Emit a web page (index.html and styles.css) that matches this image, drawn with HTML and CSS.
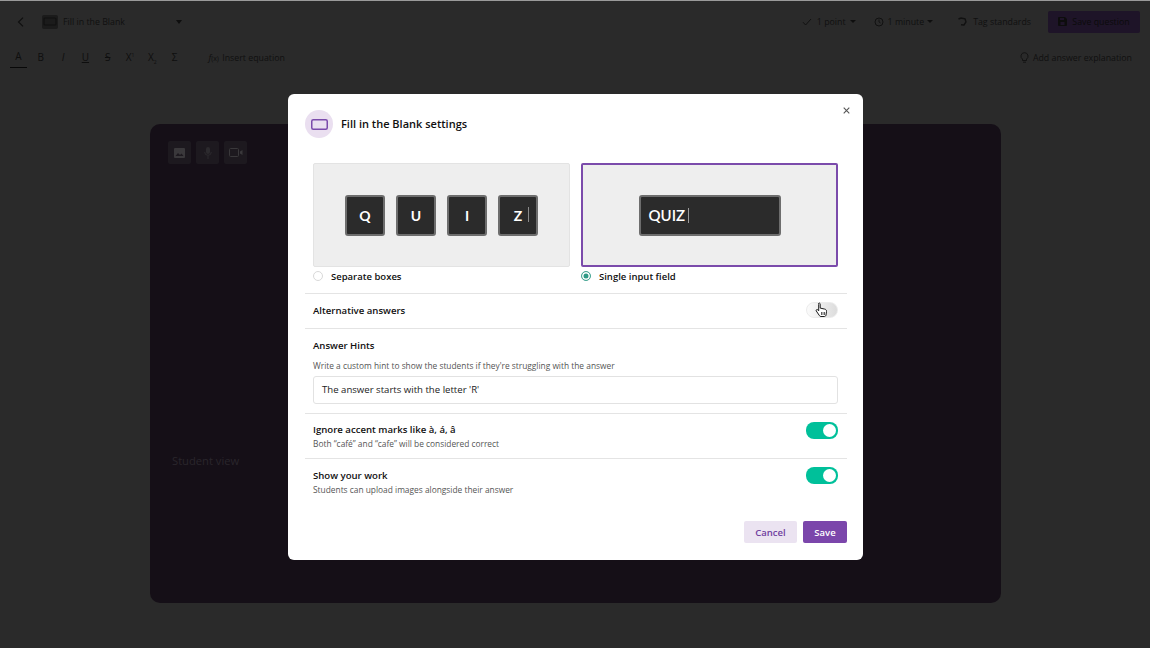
FILE: index.html
```html
<!DOCTYPE html>
<html lang="en">
<head>
    <meta charset="UTF-8">
    <meta name="viewport" content="width=device-width, initial-scale=1.0">
    <title>Fill in the Blank settings</title>
    <link rel="stylesheet" href="styles.css">
</head>
<body>
    <!-- Editor behind the overlay -->
    <div class="editor">
        <header class="topbar">
            <svg class="back" width="7" height="10" viewBox="0 0 7 10"><path d="M6 .7 1.500 5 6 9.300" fill="none" stroke="#0e0e0e" stroke-width="1.100"/></svg>
            <span class="type-icon">
                <svg width="14" height="9" viewBox="0 0 14 9"><rect x="1" y="1" width="12" height="7" rx="1" fill="none" stroke="#111" stroke-width="1.2"/></svg>
            </span>
            <span class="type-name">Fill in the Blank</span>
            <span class="caret type-caret"></span>
            <span class="top-item push points">
                <svg width="10" height="8" viewBox="0 0 10 8"><path d="M1 4.2 3.600 7 9 1" fill="none" stroke="#111" stroke-width="1"/></svg>
                1 point <span class="caret"></span>
            </span>
            <span class="top-item minutes">
                <svg width="10" height="10" viewBox="0 0 10 10"><circle cx="5" cy="5" r="4" fill="none" stroke="#111"/><path d="M5 2.500V5l1.600 1" fill="none" stroke="#111" stroke-width=".9"/></svg>
                1 minute <span class="caret"></span>
            </span>
            <span class="top-item tag">
                <svg width="10" height="9" viewBox="0 0 10 9"><path d="M1.500 2 4 1l4 .8L9 5 7 8 4 7.800" fill="none" stroke="#111" stroke-width="1.400"/></svg>
                Tag standards
            </span>
            <span class="save-question">
                <svg width="9" height="9" viewBox="0 0 9 9"><path d="M0 1a1 1 0 0 1 1-1h6l2 2v6a1 1 0 0 1-1 1H1a1 1 0 0 1-1-1z" fill="#0d0d0d"/><rect x="2" y="1" width="4" height="2" fill="#1e1428"/><rect x="2.500" y="5" width="4" height="3" fill="#1e1428"/></svg>
                Save question
            </span>
        </header>

        <div class="toolbar">
            <span class="tool tool-active">A</span>
            <span class="tool">B</span>
            <span class="tool tool-italic">I</span>
            <span class="tool tool-under">U</span>
            <span class="tool tool-strike">S</span>
            <span class="tool">X<sup>1</sup></span>
            <span class="tool">X<sub>2</sub></span>
            <span class="tool">Σ</span>
            <span class="equation"><i>f</i><small>(x)</small> Insert equation</span>
            <span class="hint-link">
                <svg width="9" height="11" viewBox="0 0 9 11"><path d="M4.500 .7a3.500 3.500 0 0 0-2 6.400V8.500h4V7.100a3.500 3.500 0 0 0-2-6.400zM3 10.200h3" fill="none" stroke="#111" stroke-width=".9"/></svg>
                Add answer explanation
            </span>
        </div>

        <section class="question-card">
            <div class="media-buttons">
                <span class="media-btn">
                    <svg width="11" height="10" viewBox="0 0 11 10"><rect width="11" height="10" rx="1" fill="#3a383b"/><path d="M1.500 8 4 5l2 2 1.500-1.500L9.500 8z" fill="#1d191f"/></svg>
                </span>
                <span class="media-btn">
                    <svg width="8" height="12" viewBox="0 0 8 12"><rect x="2" y="0" width="4" height="7" rx="2" fill="#2c2a2e"/><path d="M.7 5a3.300 3.300 0 0 0 6.600 0M4 8.500V12" fill="none" stroke="#2c2a2e"/></svg>
                </span>
                <span class="media-btn">
                    <svg width="14" height="9" viewBox="0 0 14 9"><rect x=".5" y=".5" width="9" height="8" rx="1" fill="none" stroke="#3a383b"/><path d="M11 3.500 13.500 2v5L11 5.500z" fill="#3a383b"/></svg>
                </span>
            </div>
            <p class="student-view">Student view</p>
        </section>
    </div>

    <!-- Settings modal -->
    <div class="modal">
        <div class="modal-head">
            <span class="modal-icon">
                <svg width="17" height="11" viewBox="0 0 17 11"><rect x=".75" y=".75" width="15.500" height="9.500" rx="1.500" fill="none" stroke="#7b4bab" stroke-width="1.500"/></svg>
            </span>
            <h2>Fill in the Blank settings</h2>
            <svg class="close" width="7" height="7" viewBox="0 0 7 7"><path d="M.7.7l5.600 5.600M6.300.7.7 6.300" stroke="#555" stroke-width="1.100"/></svg>
        </div>

        <div class="options">
            <div class="option">
                <div class="preview">
                    <span class="key">Q</span>
                    <span class="key">U</span>
                    <span class="key">I</span>
                    <span class="key key-cursor">Z</span>
                </div>
                <label class="radio-row"><span class="radio"></span>Separate boxes</label>
            </div>
            <div class="option">
                <div class="preview preview-selected">
                    <span class="key key-wide">QUIZ</span>
                </div>
                <label class="radio-row"><span class="radio radio-on"></span>Single input field</label>
            </div>
        </div>

        <div class="row row-alt">
            <span class="row-title">Alternative answers</span>
            <span class="switch">
                <svg class="pointer" width="13" height="16" viewBox="0 0 13 16"><path d="M3.500 1.500c.8-.8 1.700-.3 1.700.6v4l4.500 1c1.300.3 2 1.200 1.800 2.500l-.5 3.400c-.1 1-.8 1.500-1.700 1.500H6c-.7 0-1.200-.3-1.600-.9L1.300 9c-.6-1 .6-2 1.500-1.200l.9 1V2.500z" fill="#fff" stroke="#1a1a1a" stroke-width="1"/><path d="M6.500 10v3M8 10v3M9.500 10v3" stroke="#1a1a1a" stroke-width=".7"/></svg>
            </span>
        </div>

        <div class="row-stack hints">
            <span class="row-title">Answer Hints</span>
            <p class="row-desc hint-desc">Write a custom hint to show the students if they're struggling with the answer</p>
            <div class="hint-input">The answer starts with the letter 'R'</div>
        </div>

        <div class="row row-toggle">
            <div>
                <span class="row-title">Ignore accent marks like à, á, â</span>
                <p class="row-desc">Both “café” and “cafe” will be considered correct</p>
            </div>
            <span class="switch switch-on"></span>
        </div>

        <div class="row row-toggle row-last">
            <div>
                <span class="row-title">Show your work</span>
                <p class="row-desc">Students can upload images alongside their answer</p>
            </div>
            <span class="switch switch-on"></span>
        </div>

        <div class="modal-foot">
            <button type="button" class="btn-cancel">Cancel</button>
            <button type="button" class="btn-save">Save</button>
        </div>
    </div>
</body>
</html>
```

FILE: styles.css
```css
* { box-sizing: border-box; }
html, body { height: 100%; }
body {
    margin: 0;
    height: 648px;
    overflow: hidden;
    background: #2a2a2a;
    border-top: 1px solid #9a9a9a;
    font-family: "Open Sans", "Noto Sans", sans-serif;
    color: #101010;
}

/* Dimmed editor */
.editor {
    height: 100%;
    display: flex;
    flex-direction: column;
}
.topbar {
    height: 41px;
    display: flex;
    align-items: center;
    padding: 0 10px 0 17px;
    font-size: 8.800px;
}
.back { margin-right: 18px; }
.type-icon {
    width: 16px;
    height: 14px;
    background: #1b1b1b;
    border-radius: 2px;
    display: flex;
    align-items: center;
    justify-content: center;
    margin-right: 5px;
}
.type-name { width: 113px; }
.caret {
    display: inline-block;
    width: 0;
    height: 0;
    border-left: 3px solid transparent;
    border-right: 3px solid transparent;
    border-top: 3px solid #0e0e0e;
    vertical-align: middle;
}
.type-caret { border-left-width: 3.500px; border-right-width: 3.500px; border-top-width: 4px; }
.top-item {
    display: flex;
    align-items: center;
    gap: 4px;
    white-space: nowrap;
}
.top-item svg { margin-right: 1px; }
.push { margin-left: auto; }
.points { margin-right: 18px; }
.minutes { margin-right: 24px; gap: 3px; }
.tag { margin-right: 17px; gap: 5px; }
.save-question {
    width: 92px;
    height: 22px;
    background: #1e1428;
    border-radius: 2px;
    display: flex;
    align-items: center;
    justify-content: center;
    gap: 5px;
    color: #0b0b0b;
}

.toolbar {
    height: 31px;
    display: flex;
    align-items: center;
    padding: 0 18px 0 10px;
    font-size: 8.800px;
}
.tool {
    width: 17px;
    margin-right: 5.300px;
    height: 17px;
    text-align: center;
    line-height: 17px;
    font-size: 10px;
    color: #0e0e0e;
}
.tool sup, .tool sub { font-size: 5px; line-height: 0; }
.tool-active { border-bottom: 1px solid #080808; height: 20px; margin-top: 1px; }
.tool-italic { font-style: italic; }
.tool-under { text-decoration: underline; }
.tool-strike { text-decoration: line-through; }
.equation { margin-left: 20px; }
.equation small { font-size: 7px; margin-right: 1px; }
.hint-link {
    margin-left: auto;
    display: flex;
    align-items: center;
    gap: 4px;
}

.question-card {
    width: 851px;
    height: 479px;
    margin: 51px 0 0 150px;
    background: #150f17;
    border-radius: 10px;
    padding: 17px 18px;
}
.media-buttons { display: flex; gap: 5px; }
.media-btn {
    width: 23px;
    height: 23px;
    background: #1d191f;
    border-radius: 2px;
    display: flex;
    align-items: center;
    justify-content: center;
}
.student-view {
    margin: 289px 0 0 4px;
    font-size: 11.200px;
    color: #2a262c;
}

/* Modal */
.modal {
    position: absolute;
    left: 288px;
    top: 94px;
    width: 575px;
    height: 466px;
    background: #fff;
    border-radius: 6px;
    padding: 16px 16px 0 17px;
}
.modal-head {
    height: 28px;
    display: flex;
    align-items: center;
}
.modal-icon {
    width: 28px;
    height: 28px;
    border-radius: 50%;
    background: #eadff0;
    display: flex;
    align-items: center;
    justify-content: center;
    margin-right: 8px;
}
.modal-head h2 {
    margin: 0;
    font-size: 11px;
    font-weight: 600;
    line-height: 28px;
}
.close {
    position: absolute;
    top: 13px;
    right: 13px;
}

.options {
    display: flex;
    gap: 11px;
    margin: 25px 9px 0 8px;
}
.option { width: 257px; }
.preview {
    height: 104px;
    background: #eeeeee;
    border: 1px solid #e3e3e3;
    border-radius: 2px;
    display: flex;
    align-items: center;
    justify-content: center;
    gap: 11px;
}
.preview-selected { border: 2px solid #7b4bab; }
.key {
    width: 40px;
    height: 41px;
    background: #2b2b2b;
    border: 2px solid #6d6d6d;
    border-radius: 3px;
    color: #fff;
    font-family: Lato, "Open Sans", sans-serif;
    font-size: 14px;
    font-weight: 700;
    display: flex;
    align-items: center;
    justify-content: center;
}
.key-cursor { position: relative; }
.key-cursor::after {
    content: "";
    position: absolute;
    right: 7px;
    top: 10px;
    width: 1px;
    height: 15px;
    background: #8a8a8a;
}
.key-wide {
    width: 142px;
    justify-content: flex-start;
    padding-left: 8px;
    font-weight: 600;
    font-size: 15px;
}
.key-wide::after {
    content: "";
    width: 1px;
    height: 15px;
    margin-left: 3px;
    background: #9a9a9a;
}
.radio-row {
    display: flex;
    align-items: center;
    gap: 8px;
    height: 18px;
    font-size: 9.500px;
    font-weight: 600;
}
.radio {
    width: 10px;
    height: 10px;
    border-radius: 50%;
    border: 1px solid #d9d9d9;
    background: #fff;
}
.radio-on {
    border: 1.500px solid #4aa796;
    background: #2f9a86;
    box-shadow: inset 0 0 0 1.500px #fff;
}

.row {
    display: flex;
    justify-content: space-between;
    align-items: center;
    padding: 0 9px 0 8px;
    border-top: 1px solid #e4e4e4;
}
.row-alt { height: 35px; margin-top: 8px; }
.row-alt .switch { margin-top: -2px; }
.row-toggle { height: 45px; }
.row-last { height: 46px; padding-top: 2px; }
.row-toggle .switch { align-self: flex-start; margin-top: 8px; }
.row-last .switch { margin-top: 6px; }
.row-title {
    display: block;
    font-size: 9.600px;
    font-weight: 600;
    line-height: 14px;
}
.row-desc {
    margin: 0;
    font-size: 8.370px;
    line-height: 13px;
    color: #555;
}
.row-stack { border-top: 1px solid #e4e4e4; padding: 10px 9px 0 8px; }
.hints { height: 85px; }
.hint-desc { margin-top: 6px; }
.hint-input {
    height: 28px;
    margin-top: 4px;
    border: 1px solid #e2e2e2;
    border-radius: 3px;
    padding-left: 8px;
    font-size: 9.600px;
    line-height: 26px;
    color: #222;
}
.switch {
    position: relative;
    width: 32px;
    height: 16px;
    border-radius: 8px;
    background: linear-gradient(90deg, #fbfbfb, #dcdcdc);
    border: 1px solid #ececec;
}
.switch-on {
    background: #00c09a;
    border: 0;
    height: 17px;
}
.switch-on::after {
    content: "";
    position: absolute;
    right: 2px;
    top: 2px;
    width: 13px;
    height: 13px;
    border-radius: 50%;
    background: #fff;
}
.pointer {
    position: absolute;
    left: 8px;
    top: -1px;
}

.modal-foot {
    display: flex;
    justify-content: flex-end;
    gap: 6px;
    margin-top: 17px;
}
.modal-foot button {
    height: 22px;
    border: 0;
    border-radius: 2px;
    font-family: inherit;
    font-size: 9.500px;
    font-weight: 600;
    padding: 0;
}
.btn-cancel { width: 53px; background: #ebe3f1; color: #7040a0; }
.btn-save { width: 44px; background: #7b46ab; color: #fff; }
```
